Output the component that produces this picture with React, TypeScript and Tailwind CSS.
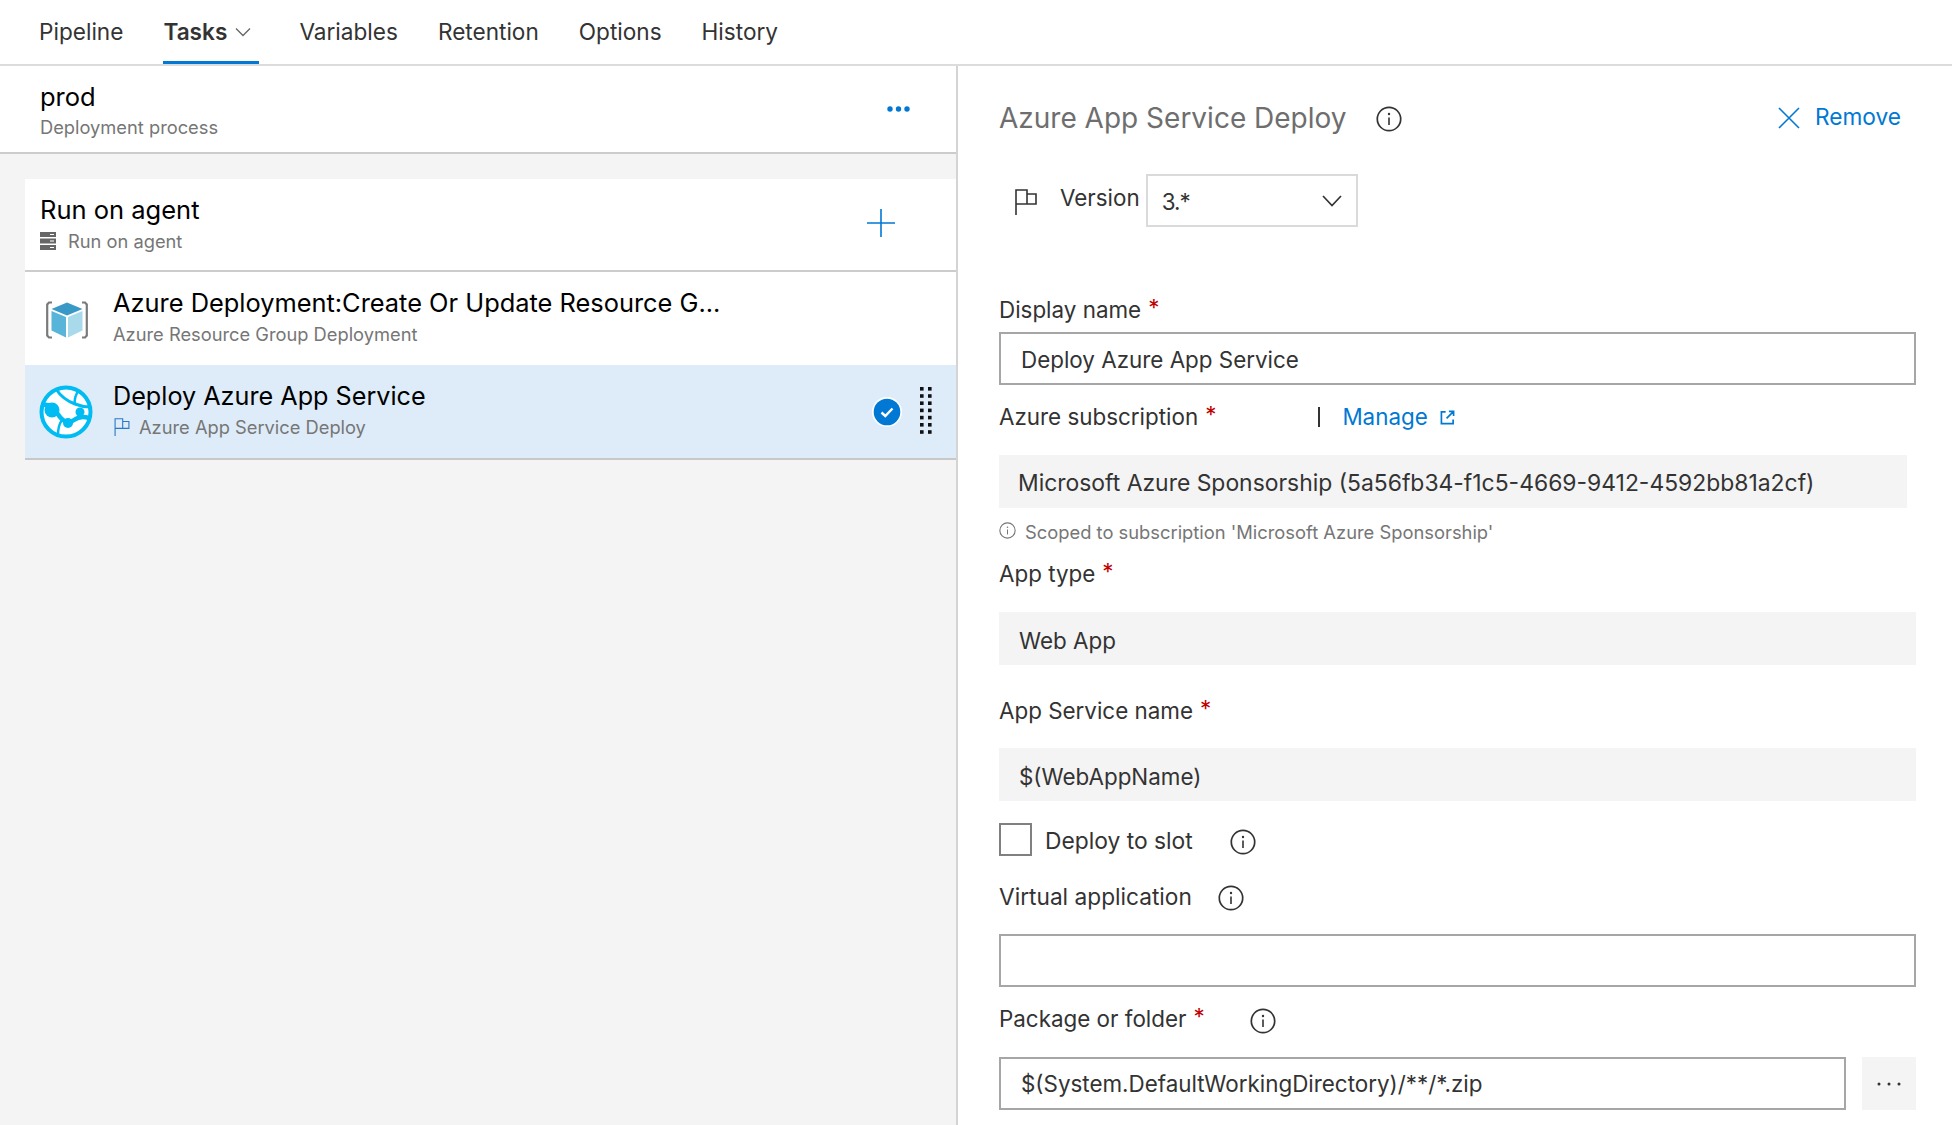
import React from 'react';

const font = "font-['Inter','Liberation_Sans',sans-serif]";

function InfoIcon({ size = 26, color = '#333333' }: { size?: number; color?: string }) {
  return (
    <svg width={size} height={size} viewBox="0 0 26 26" fill="none" className="shrink-0">
      <circle cx="13" cy="13" r="11.7" stroke={color} strokeWidth="1.7" />
      <circle cx="13" cy="8" r="1.2" fill={color} />
      <path d="M13 11.5V19" stroke={color} strokeWidth="1.6" />
    </svg>
  );
}

function FlagIcon({ size = 24, color = '#333333' }: { size?: number; color?: string }) {
  return (
    <svg width={size} height={size} viewBox="0 0 24 26" fill="none" className="shrink-0">
      <path d="M2 26V1H13V15H2M13 5H22V15H13" stroke={color} strokeWidth="1.6" />
    </svg>
  );
}

function CubeIcon() {
  return (
    <svg width="42" height="38" viewBox="0 0 42 38" fill="none">
      <path d="M6 1.5H3L1.2 3.5V34.5L3 36.5H6M36 1.5H39L40.8 3.5V34.5L39 36.5H36" stroke="#7a7a7a" strokeWidth="2.2" />
      <path d="M21 1.5L36.5 8L21 14.5L5.5 8Z" fill="#3999c6" />
      <path d="M5.5 10L20 16V36.5L5.5 29.5Z" fill="#59b4d9" />
      <path d="M36.5 10L22 16V36.5L36.5 29.5Z" fill="#a9daeb" />
    </svg>
  );
}

function GlobeIcon() {
  return (
    <svg width="54" height="54" viewBox="0 0 54 54" fill="none">
      <circle cx="27" cy="27" r="24.5" fill="#ffffff" stroke="#00bcf2" strokeWidth="4" />
      <path d="M17 4C22 12 28 16 36 19C41 21 45 22 51 22" stroke="#00bcf2" strokeWidth="3" />
      <path d="M4 20C9 19 13 21 16 25C19 29 20 32 24 35C28 38 31 38 35 35C39 32 44 31 50 33" stroke="#00bcf2" strokeWidth="4.5" />
      <path d="M23 35C20 39 19 44 19 50M36 19C35 14 37 9 40 5" stroke="#00bcf2" strokeWidth="2.5" />
      <circle cx="13" cy="25" r="7.5" fill="#00bcf2" />
      <circle cx="29" cy="38" r="5" fill="#00bcf2" />
      <circle cx="41" cy="27" r="4.5" fill="#00bcf2" />
    </svg>
  );
}

function Gripper() {
  const rows = [0, 1, 2, 3, 4, 5, 6];
  return (
    <svg width="12" height="47" viewBox="0 0 12 47" fill="#111111">
      {rows.map((r) => (
        <g key={r}>
          <rect x="0" y={r * 7.2} width="3.6" height="3.6" />
          <rect x="8" y={r * 7.2} width="3.6" height="3.6" />
        </g>
      ))}
    </svg>
  );
}

function Req() {
  return <span className="text-[#c00000] ml-[7px] relative top-[-2px]">*</span>;
}

function Label({ className, children }: { className: string; children: React.ReactNode }) {
  return <div className={`h-[30px] flex items-center text-[22.4px] leading-[30px] text-[#333333] ${className}`}>{children}</div>;
}

const tabs = ['Variables', 'Retention', 'Options', 'History'];

export default function App() {
  return (
    <div className={`${font} h-[1125px] overflow-hidden bg-white flex flex-col`}>
      {/* tab bar */}
      <div className="h-[66px] shrink-0 border-b-2 border-[#dcdcdc] pl-[39px] flex gap-10 text-[22.6px] text-[#333333]">
        <div className="h-[64px] flex items-center">Pipeline</div>
        <div className="h-[64px] w-[96px] pt-[3px] flex items-center gap-2 border-b-[3px] border-[#0078d4] font-semibold">
          Tasks
          <svg width="16" height="10" viewBox="0 0 16 10" fill="none">
            <path d="M1 1.5L8 8.5L15 1.5" stroke="#666666" strokeWidth="1.3" />
          </svg>
        </div>
        {tabs.map((t) => (
          <div key={t} className="h-[64px] flex items-center">{t}</div>
        ))}
      </div>

      <div className="flex-1 flex min-h-0">
        {/* left panel */}
        <div className="w-[958px] shrink-0 bg-[#f4f4f4] border-r-2 border-[#d4d4d4]">
          <div className="h-[88px] bg-white border-b-2 border-[#cccccc] pl-10 pr-[46px] flex items-center justify-between">
            <div className="mt-[2px]">
              <div className="text-[25.5px] leading-[32px] text-black">prod</div>
              <div className="text-[18.3px] leading-[24px] text-[#767676] mt-[2px]">Deployment process</div>
            </div>
            <svg width="23" height="6" viewBox="0 0 23 6" fill="#0078d4">
              <circle cx="3" cy="3" r="2.7" />
              <circle cx="11.5" cy="3" r="2.7" />
              <circle cx="20" cy="3" r="2.7" />
            </svg>
          </div>

          <div className="ml-[25px] mt-[25px]">
            <div className="h-[93px] bg-white border-b-2 border-[#cccccc] pl-[15px] pr-[61px] flex items-center justify-between">
              <div className="mt-[-2px]">
                <div className="text-[25.5px] leading-[32px] text-black">Run on agent</div>
                <div className="flex items-center gap-[12px] text-[18.3px] leading-[24px] text-[#767676] mt-[3px]">
                  <svg width="16" height="18" viewBox="0 0 16 18" fill="#666666">
                    <path d="M0 0H16V5H0ZM0 6.5H16V11.5H0ZM0 13H16V18H0Z" />
                    <path d="M10 2H14V3H10ZM10 8.5H14V9.5H10ZM10 15H14V16H10Z" fill="#ffffff" />
                  </svg>
                  Run on agent
                </div>
              </div>
              <svg width="28" height="28" viewBox="0 0 28 28" fill="none" className="mt-[-4px]">
                <path d="M14 0V28M0 14H28" stroke="#0078d4" strokeWidth="1.6" />
              </svg>
            </div>

            <div className="h-[93px] bg-white flex items-center">
              <div className="w-[88px] shrink-0 pl-[21px] mt-[2px]">
                <CubeIcon />
              </div>
              <div className="mt-[-4px]">
                <div className="text-[25.4px] leading-[32px] text-black">Azure Deployment:Create Or Update Resource G...</div>
                <div className="text-[18.3px] leading-[24px] text-[#767676] mt-[3px]">Azure Resource Group Deployment</div>
              </div>
            </div>

            <div className="h-[95px] bg-[#deecf9] border-b-2 border-[#c8c8c8] flex items-center">
              <div className="w-[88px] shrink-0 pl-[14px]">
                <GlobeIcon />
              </div>
              <div className="flex-1 mt-[-4px]">
                <div className="text-[25.2px] leading-[32px] text-black">Deploy Azure App Service</div>
                <div className="flex items-center gap-[8px] text-[18.3px] leading-[24px] text-[#767676] mt-[3px]">
                  <FlagIcon size={18} color="#2b78c5" />
                  Azure App Service Deploy
                </div>
              </div>
              <svg width="30" height="30" viewBox="0 0 30 30" className="mr-[18px]">
                <circle cx="15" cy="15" r="15" fill="#ffffff" />
                <circle cx="15" cy="15" r="13.3" fill="#0078d4" />
                <path d="M9.5 15.5L13.3 19L20.5 11.5" fill="none" stroke="#ffffff" strokeWidth="2.4" />
              </svg>
              <div className="mr-[24px] mt-[-2px]">
                <Gripper />
              </div>
            </div>
          </div>
        </div>

        {/* right panel */}
        <div className="flex-1 pl-[41px] pr-[36px] text-[22.4px] text-[#333333]">
          <div className="mt-[32px] h-[40px] flex items-center">
            <span className="text-[28px] text-[#6e6e6e]">Azure App Service Deploy</span>
            <span className="ml-[29px] mt-[1px]"><InfoIcon /></span>
            <div className="ml-auto mr-[15px] flex items-center gap-[15px] text-[#0078d4] text-[22.7px]">
              <svg width="22" height="22" viewBox="0 0 22 22" fill="none">
                <path d="M1 1L21 21M21 1L1 21" stroke="#0078d4" strokeWidth="1.6" />
              </svg>
              <span className="mt-[-2px]">Remove</span>
            </div>
          </div>

          <div className="mt-[36px] h-[53px] flex">
            <div className="ml-[14px] mt-[15px]"><FlagIcon size={26} /></div>
            <div className="ml-[21px] mt-[9px] leading-[30px]">Version</div>
            <div className="ml-[6px] w-[212px] h-[53px] border-2 border-[#dadada] pl-[14px] pr-[14px] flex items-center justify-between">
              <span className="mt-[3px] tracking-[-1px]">3.*</span>
              <svg width="20" height="12" viewBox="0 0 20 12" fill="none">
                <path d="M1 1L10 10.5L19 1" stroke="#333333" strokeWidth="1.7" />
              </svg>
            </div>
          </div>

          <Label className="mt-[68px]">Display name<Req /></Label>
          <div className="mt-[7px] h-[53px] border-2 border-[#a6a6a6] pl-[20px] pt-[3px] flex items-center">Deploy Azure App Service</div>

          <Label className="mt-[17px]">
            Azure subscription<Req />
            <span className="w-[2px] h-[20px] bg-[#333333] ml-[102px]" />
            <span className="ml-[22px] text-[#0078d4]">Manage</span>
            <svg width="15" height="15" viewBox="0 0 16 16" fill="none" className="ml-[12px]">
              <path d="M6 2H1.5V14.5H14V10M9.5 1.5H14.5V6.5M14.5 1.5L7 9" stroke="#0078d4" strokeWidth="1.8" />
            </svg>
          </Label>
          <div className="mt-[23px] h-[53px] w-[908px] bg-[#f4f4f4] pl-[19px] pt-[3px] flex items-center text-[22.9px]">
            Microsoft Azure Sponsorship (5a56fb34-f1c5-4669-9412-4592bb81a2cf)
          </div>
          <div className="mt-[10px] h-[30px] flex items-center gap-[9px] text-[18.35px] text-[#767676]">
            <span className="relative top-[-3px]"><InfoIcon size={17} color="#767676" /></span>
            Scoped to subscription 'Microsoft Azure Sponsorship'
          </div>

          <Label className="mt-[11px]">App type<Req /></Label>
          <div className="mt-[23px] h-[53px] bg-[#f4f4f4] pl-[20px] pt-[4px] flex items-center">Web App</div>

          <Label className="mt-[31px]">App Service name<Req /></Label>
          <div className="mt-[22px] h-[53px] bg-[#f4f4f4] pl-[20px] pt-[4px] flex items-center">$(WebAppName)</div>

          <div className="mt-[22px] h-[33px] flex items-center">
            <div className="w-[33px] h-[33px] border-2 border-[#808080]" />
            <span className="ml-[13px] mt-[4px] text-[22.8px]">Deploy to slot</span>
            <span className="ml-[37px] mt-[4px]"><InfoIcon /></span>
          </div>

          <Label className="mt-[26px]">
            <span className="text-[22.7px]">Virtual application</span>
            <span className="ml-[26px] mt-[1px]"><InfoIcon /></span>
          </Label>
          <div className="mt-[22px] h-[53px] border-2 border-[#a6a6a6]" />

          <Label className="mt-[17px]">
            Package or folder<Req />
            <span className="ml-[45px] mt-[3px]"><InfoIcon /></span>
          </Label>
          <div className="mt-[23px] h-[53px] flex gap-[16px]">
            <div className="flex-1 border-2 border-[#a6a6a6] pl-[20px] pt-[1px] flex items-center">$(System.DefaultWorkingDirectory)/**/*.zip</div>
            <div className="w-[54px] bg-[#f4f4f4] flex items-center justify-center">
              <svg width="24" height="4" viewBox="0 0 24 4" fill="#333333">
                <circle cx="2" cy="2" r="1.5" />
                <circle cx="12" cy="2" r="1.5" />
                <circle cx="22" cy="2" r="1.5" />
              </svg>
            </div>
          </div>
        </div>
      </div>
    </div>
  );
}
